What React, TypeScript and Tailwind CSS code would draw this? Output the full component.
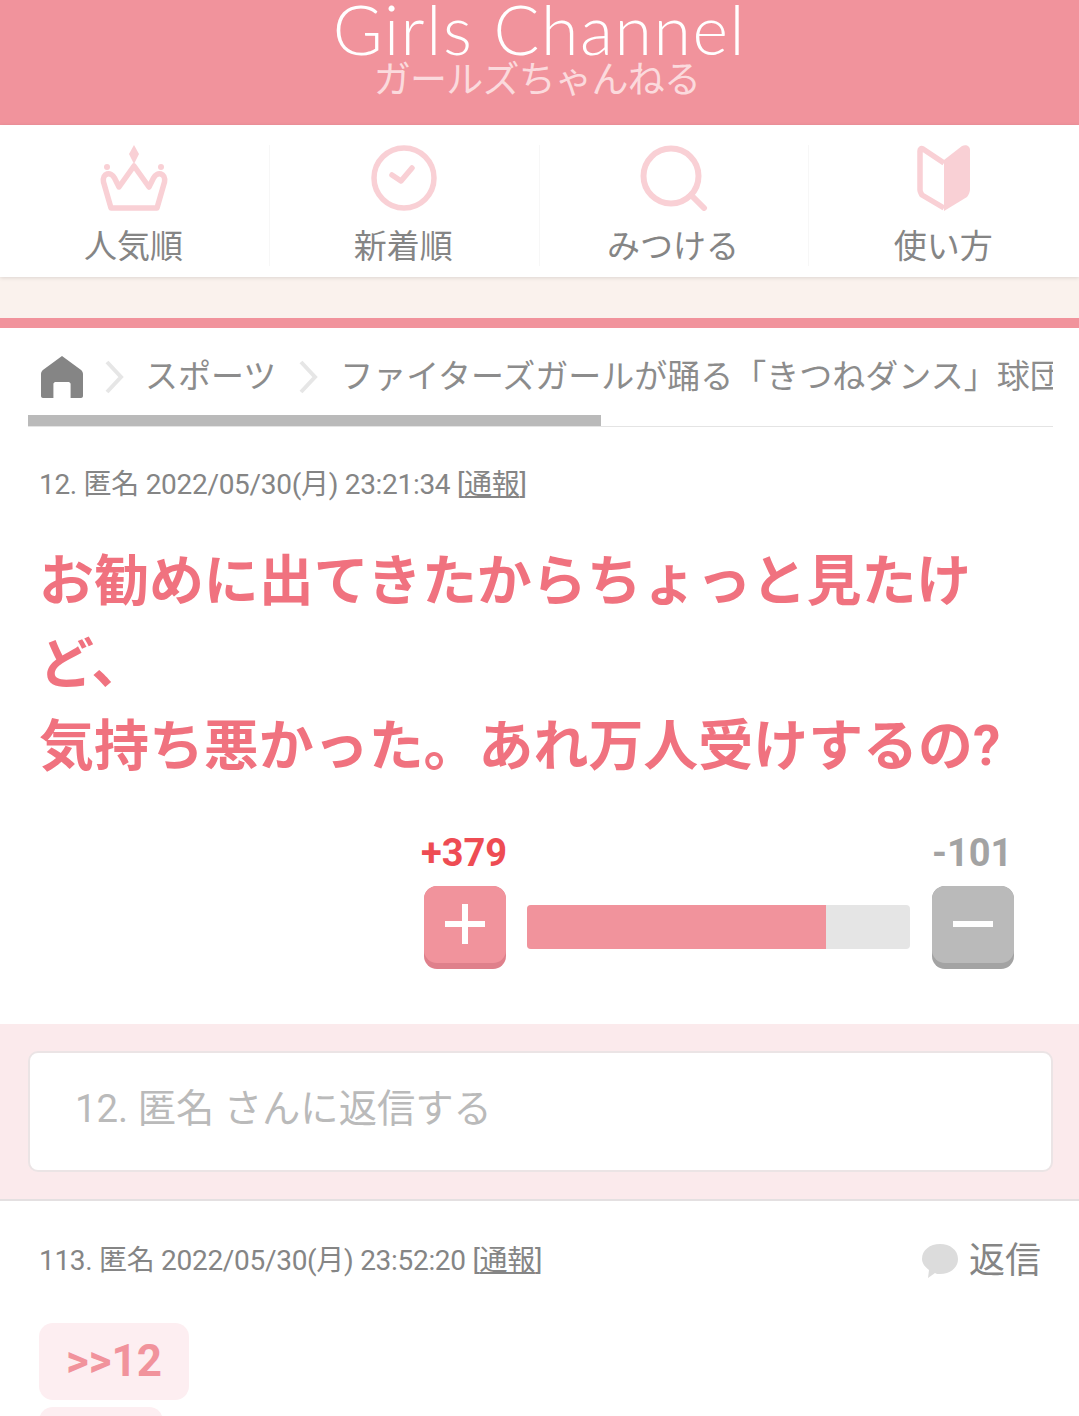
import React from 'react';

const jp = { fontFamily: 'Roboto, "Noto Sans CJK JP", sans-serif' };

const Crown = () => (
  <svg width="68" height="66" viewBox="0 0 68 66" fill="none">
    <path d="M34 0l5 9-5 10-5-10z" fill="#f9d0d5" />
    <circle cx="7" cy="22" r="3" fill="#f9d0d5" />
    <circle cx="61" cy="22" r="3" fill="#f9d0d5" />
    <path d="M11 63 L3.5 37 C2 28 11 26 14.5 33 L19 42 L34 21 L49 42 L53.5 33 C57 26 66 28 64.5 37 L57 63 Z" stroke="#f9d0d5" strokeWidth="5.5" strokeLinejoin="round" />
  </svg>
);

const Clock = () => (
  <svg width="66" height="66" viewBox="0 0 66 66" fill="none">
    <circle cx="33" cy="33" r="30" stroke="#f9d0d5" strokeWidth="5.5" />
    <path d="M21 30l9 6 11-13" stroke="#f9d0d5" strokeWidth="5.5" strokeLinecap="round" strokeLinejoin="round" />
  </svg>
);

const Search = () => (
  <svg width="68" height="66" viewBox="0 0 68 66" fill="none">
    <circle cx="31" cy="31" r="27.5" stroke="#f9d0d5" strokeWidth="6" />
    <path d="M51 50l13 13" stroke="#f9d0d5" strokeWidth="6" strokeLinecap="round" />
  </svg>
);

const Leaf = () => (
  <svg width="54" height="66" viewBox="0 0 54 66" fill="none">
    <path d="M27 15 L45 1 C49 -1 53 1 53 5 V44 C53 47 52 49 50 52 L27 66 Z" fill="#f9d0d5" />
    <path d="M27 18 L6 4 C4 3 3 4 3 6 V45 C3 47 4 48 5 50 L27 63" stroke="#f9d0d5" strokeWidth="5.5" strokeLinejoin="round" />
  </svg>
);

const navItems = [
  { label: '人気順', icon: <Crown /> },
  { label: '新着順', icon: <Clock /> },
  { label: 'みつける', icon: <Search /> },
  { label: '使い方', icon: <Leaf /> },
];

const Chevron = () => (
  <svg width="20" height="34" viewBox="0 0 20 34" fill="none" className="shrink-0">
    <path d="M3 2l14 15L3 32" stroke="#e6e6e6" strokeWidth="4" />
  </svg>
);

const Home = () => (
  <svg width="42" height="42" viewBox="0 0 44 42" preserveAspectRatio="none" className="shrink-0">
    <path d="M22 0 L42 14 C43 15 44 16 44 18 V40 C44 41 43 42 42 42 H31 V28 C31 27 30 26 29 26 H15 C14 26 13 27 13 28 V42 H2 C1 42 0 41 0 40 V18 C0 16 1 15 2 14 Z" fill="#858585" />
  </svg>
);

const VoteButton = ({ minus }: { minus?: boolean }) => (
  <div className={`relative w-[82px] h-[83px] rounded-[13px] ${minus ? 'bg-[#a3a3a3]' : 'bg-[#df808b]'}`}>
    <div className={`h-[77px] rounded-[13px] flex items-center justify-center ${minus ? 'bg-[#bababa]' : 'bg-[#f1939c]'}`}>
      <svg width="40" height="40" viewBox="0 0 40 40" fill="#fff">
        <rect x="0" y="17" width="40" height="6" />
        {!minus && <rect x="17" y="0" width="6" height="40" />}
      </svg>
    </div>
  </div>
);

const Meta = ({ text }: { text: string }) => (
  <span className="text-[28px] leading-[36px] text-[#858585] tracking-[-0.3px]">
    {text} [<span className="underline">通報</span>]
  </span>
);

export default function App() {
  return (
    <div className="w-[1079px] h-[1416px] overflow-hidden bg-white" style={jp}>
      <header className="h-[125px] bg-[#f1939c] flex flex-col items-center">
        <div className="text-[68px] leading-[58px] text-white font-light tracking-[1.6px] font-['Lato','Noto_Sans',sans-serif]">Girls Channel</div>
        <div className="text-[37px] leading-[36px] mt-[5px] pr-[5px] text-[#fbdadd] font-normal tracking-[-0.7px]">ガールズちゃんねる</div>
      </header>

      <nav className="h-[152px] grid grid-cols-4 bg-white shadow-[0_1px_4px_rgba(0,0,0,0.12)] relative pt-[20px]">
        {navItems.map((item, i) => (
          <div key={item.label} className={`h-[121px] flex flex-col items-center ${i < 3 ? 'border-r border-[#f7f7f7]' : ''}`}>
            <div className="h-[66px] flex items-center justify-center">{item.icon}</div>
            <div className="text-[33px] leading-[44px] mt-[14px] pr-[2px] text-[#858585]">{item.label}</div>
          </div>
        ))}
      </nav>

      <div className="h-[41px] bg-[#faf2ed]" />
      <div className="h-[10px] bg-[#f1939c]" />

      <div className="ml-[28px] mr-[26px] h-[87px] flex items-center gap-[21px] pl-[13px] overflow-hidden whitespace-nowrap text-[33px] text-[#8c8c8c] pt-[10px]">
        <Home />
        <Chevron />
        <span className="shrink-0">スポーツ</span>
        <div className="ml-[1px] mr-[1px] shrink-0 flex"><Chevron /></div>
        <span className="shrink-0">ファイターズガールが踊る「きつねダンス」球団</span>
      </div>
      <div className="ml-[28px] mr-[26px] h-[12px] border-b border-[#e4e4e4]">
        <div className="w-[573px] h-[11px] bg-[#bababa]" />
      </div>

      <div className="px-[39px] pt-[40px]">
        <Meta text="12. 匿名 2022/05/30(月) 23:21:34" />
      </div>

      <div className="pl-[39px] pr-[60px] pt-[37px] text-[54.95px] leading-[82.5px] font-bold text-[#f0727f]">
        <p>お勧めに出てきたからちょっと見たけど、</p>
        <p>気持ち悪かった。あれ万人受けするの?</p>
      </div>

      <div className="ml-[424px] w-[590px] mt-[42px]">
        <div className="flex justify-between text-[38px] leading-[46px] font-bold">
          <span className="text-[#ee4c53] -ml-[3px]">+379</span>
          <span className="text-[#a3a3a3] w-[82px]">-101</span>
        </div>
        <div className="flex items-start mt-[10px]">
          <VoteButton />
          <div className="flex-1 ml-[21px] mr-[22px] mt-[19px] h-[44px] rounded-[4px] overflow-hidden bg-[#e5e5e5]">
            <div className="h-full bg-[#f1939c]" style={{ width: '78%' }} />
          </div>
          <VoteButton minus />
        </div>
      </div>

      <div className="mt-[55px] h-[177px] bg-[#fbeaec] border-b-2 border-[#e4e0e1] pl-[28px] pr-[26px] pt-[27px]">
        <div className="h-[121px] bg-white border-2 border-[#ebe4e5] rounded-[10px] flex items-center pl-[45px] pb-[4px] text-[38.3px] text-[#bababa]">
          12. 匿名 さんに返信する
        </div>
      </div>

      <div className="pl-[39px] pr-[38px] pt-[38px] flex items-center justify-between">
        <Meta text="113. 匿名 2022/05/30(月) 23:52:20" />
        <div className="flex items-center gap-[10px]">
          <svg width="38" height="34" viewBox="0 0 38 34" fill="#dcdcdc">
            <path d="M19 0C29 0 37 6 37 15s-8 15-18 15c-2 0-4 0-5-1l-7 5 1-8C4 23 1 19 1 15 1 6 9 0 19 0z" />
          </svg>
          <span className="text-[36px] leading-[44px] text-[#858585]">返信</span>
        </div>
      </div>

      <div className="px-[39px] pt-[40px] flex flex-col items-start gap-[7px]">
        <div className="w-[150px] h-[77px] rounded-[14px] bg-[#fdeef1] flex items-center justify-center text-[44px] font-bold text-[#f1939c]">&gt;&gt;12</div>
        <div className="w-[124px] h-[77px] rounded-[14px] bg-[#fdeef1]" />
      </div>
    </div>
  );
}
